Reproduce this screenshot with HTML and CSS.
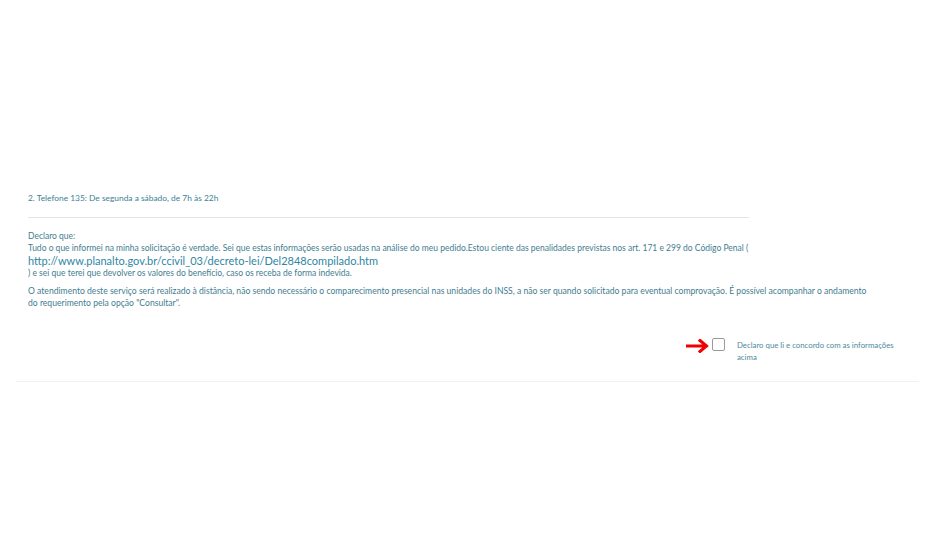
FILE: index.html
```html
<!DOCTYPE html>
<html lang="pt-BR">
<head>
  <meta charset="UTF-8">
  <title>Requerimento</title>
  <link rel="stylesheet" href="styles.css">
</head>
<body>
  <div class="card">
    <div class="content">
      <p class="phone">2. Telefone 135: De segunda a sábado, de 7h às 22h</p>
      <hr class="sep">

      <div class="declaration">
        <div>Declaro que:</div>
        <div>Tudo o que informei na minha solicitação é verdade. Sei que estas informações serão usadas na análise do meu pedido.Estou ciente das penalidades previstas nos art. 171 e 299 do Código Penal (</div>
        <a class="law-link" href="#">http://www.planalto.gov.br/ccivil_03/decreto-lei/Del2848compilado.htm</a>
        <div>) e sei que terei que devolver os valores do benefício, caso os receba de forma indevida.</div>
      </div>

      <p class="notice">O atendimento deste serviço será realizado à distância, não sendo necessário o comparecimento presencial nas unidades do INSS, a não ser quando solicitado para eventual comprovação. É possível acompanhar o andamento do requerimento pela opção "Consultar".</p>

      <div class="agree-row">
        <svg class="arrow" width="23" height="14" viewBox="0 0 23 14">
          <path d="M1 7 H20 M14 1.5 L20.5 7 L14 12.5" fill="none" stroke="#f00000" stroke-width="3" stroke-linecap="square" stroke-linejoin="miter"/>
        </svg>
        <span class="check"></span>
        <label class="agree-label">Declaro que li e concordo com as informações acima</label>
      </div>
    </div>
  </div>
</body>
</html>
```

FILE: styles.css
```css
body {
  margin: 0;
  background: #ffffff;
  font-family: Lato, "Open Sans", sans-serif;
  color: #3b8197;
}
.card {
  margin: 0 17px 0 16px;
  padding-top: 191px;
  border-bottom: 1px solid #f1f1f1;
}
.content {
  padding: 0 12px 18px;
}
.phone {
  margin: 0;
  font-size: 8.4px;
  line-height: 14px;
}
.sep {
  width: 721px;
  margin: 12px 0 12px;
  border: none;
  border-top: 1px solid #e4e4e4;
}
.declaration {
  font-size: 8.5px;
  line-height: 12px;
  color: #3f7d90;
}
.law-link {
  display: block;
  font-size: 11px;
  line-height: 13px;
  color: #2f86a4;
  text-decoration: none;
}
.notice {
  margin: 6px 0 0;
  width: 850px;
  font-size: 8.6px;
  line-height: 12px;
  color: #3f7d90;
}
.agree-row {
  display: flex;
  justify-content: flex-end;
  align-items: flex-start;
  margin-top: 28px;
}
.arrow {
  margin-top: 2px;
  margin-right: 3px;
}
.check {
  width: 11px;
  height: 11px;
  border: 1px solid #9a9a9a;
  border-radius: 2px;
  margin-top: 1px;
}
.agree-label {
  width: 170px;
  margin-left: 12px;
  margin-top: 2px;
  font-size: 7.8px;
  line-height: 12px;
  color: #4b8a9c;
}
```
